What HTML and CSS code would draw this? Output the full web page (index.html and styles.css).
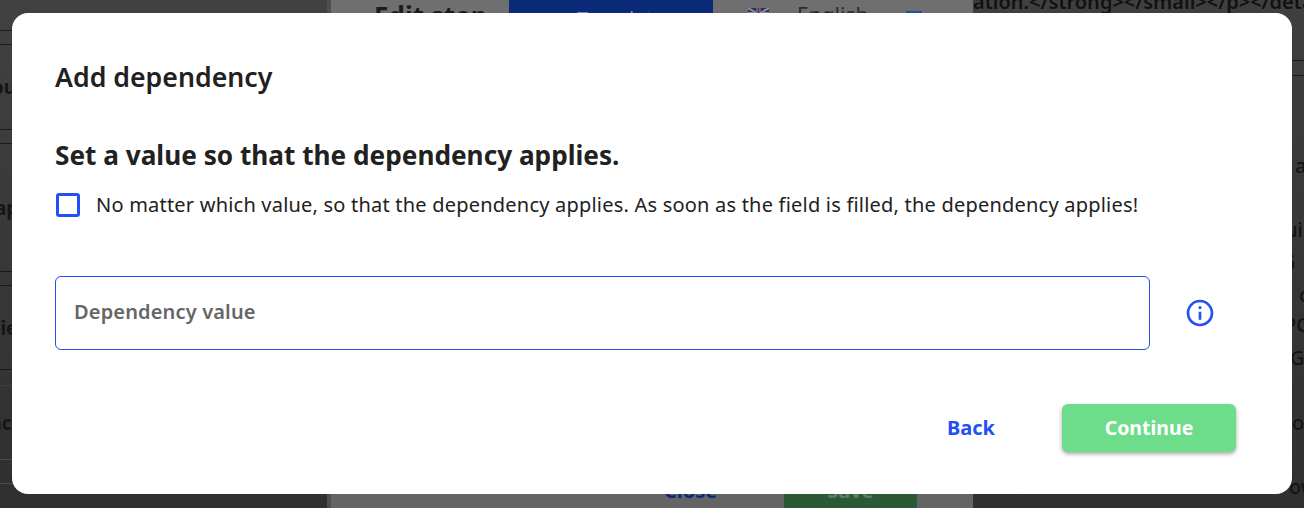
FILE: index.html
```html
<!DOCTYPE html>
<html lang="en">
<head>
<meta charset="utf-8">
<title>Add dependency</title>
<link rel="stylesheet" href="styles.css">
</head>
<body>
<div class="page">
  <aside class="side side-left">
    <div class="row r1"></div>
    <div class="row r2"></div>
    <div class="row r3"><span>Group</span></div>
    <div class="row r2"></div>
    <div class="row r4"><span>Mapping</span></div>
    <div class="row r2"></div>
    <div class="row r5"><span>Field</span></div>
    <div class="row r6"></div>
    <div class="row r7"><span>Include</span></div>
    <div class="row r8"></div>
  </aside>
  <main class="mid">
    <div class="mid-top">
      <span class="mid-title">Edit step</span>
      <span class="mid-tab"><i class="tab-icon"></i>Template</span>
      <svg class="mid-flag" viewBox="0 0 21 12" aria-hidden="true">
        <rect width="21" height="12" fill="#2a2f5c"/>
        <path d="M0 0L21 12M21 0L0 12" stroke="#8a8aa0" stroke-width="2"/>
        <path d="M10.5 0V12M0 6H21" stroke="#8a8aa0" stroke-width="4"/>
        <path d="M10.5 0V12M0 6H21" stroke="#7a2a3a" stroke-width="2"/>
      </svg>
      <span class="mid-lang">English</span>
      <span class="mid-chip"></span>
    </div>
    <div class="mid-bottom">
      <span class="mid-close">Close</span>
      <span class="mid-save">Save</span>
    </div>
  </main>
  <aside class="side side-right">
    <div class="code">ation.&lt;/strong&gt;&lt;/small&gt;&lt;/p&gt;&lt;/details&gt;</div>
    <div class="rlines"></div>
    <div class="rt a">a</div>
    <div class="rt b">ui</div>
    <div class="rt c">G</div>
    <div class="rt d">c</div>
    <div class="rt e">PC</div>
    <div class="rt f">G</div>
    <div class="rt g">ot</div>
    <div class="rt h">ow</div>
  </aside>
</div>
<div class="dialog" role="dialog">
  <h2 class="title">Add dependency</h2>
  <h3 class="subtitle">Set a value so that the dependency applies.</h3>
  <label class="check">
    <span class="box"></span>
    <span class="check-text">No matter which value, so that the dependency applies. As soon as the field is filled, the dependency applies!</span>
  </label>
  <div class="field-row">
    <div class="field"><span class="placeholder">Dependency value</span></div>
    <svg class="info" viewBox="0 0 24 24" aria-hidden="true"><path d="M11 7h2v2h-2zm0 4h2v6h-2zm1-9C6.48 2 2 6.48 2 12s4.48 10 10 10 10-4.48 10-10S17.52 2 12 2zm0 18c-4.41 0-8-3.59-8-8s3.59-8 8-8 8 3.59 8 8-3.59 8-8 8z"/></svg>
  </div>
  <div class="actions">
    <button class="btn-back" type="button">Back</button>
    <button class="btn-continue" type="button">Continue</button>
  </div>
</div>
</body>
</html>
```
FILE: styles.css
```css
* { box-sizing: border-box; }
html, body { margin: 0; height: 100%; }
body { font-family: "Noto Sans", "Open Sans", sans-serif; overflow: hidden; background: #333; color: #212121; }

.page { display: flex; width: 1304px; height: 508px; overflow: hidden; }
.side { flex: none; overflow: hidden; color: #151515; font-weight: 700; font-size: 19px; }
.side-left { width: 327px; background: linear-gradient(#414141, #2f2f2f); }
.side-right { width: 331px; background: linear-gradient(#3f3f3f, #303030); position: relative; }

.row { border-bottom: 1px solid #1b1b1b; display: flex; align-items: center; justify-content: flex-start; }
.r1 { height: 31px; }
.r2 { height: 14px; }
.r3 { height: 85px; }
.r3 span { margin-left: -30px; }
.r4 { height: 128px; }
.r4 span { margin-left: -23px; }
.r5 { height: 84px; }
.r5 span { margin-left: -10px; }
.r6 { height: 16px; border-color: #3d3d3d; }
.r7 { height: 74px; border-color: #4a4a4a; }
.r7 span { margin-left: -18px; }
.r8 { height: 24px; border-color: #4a4a4a; }

.mid { flex: none; width: 646px; border-left: 4px solid #4f4f4f; background: linear-gradient(#6f6f6f, #646464); position: relative; }
.mid-top { display: flex; align-items: flex-start; height: 13px; overflow: hidden; }
.mid-title { margin-left: 43px; width: 135px; font-size: 26px; font-weight: 700; color: #1c1c1c; line-height: 32px; }
.mid-tab { width: 204px; height: 13px; background: #0a2a78; color: #7f8aae; font-size: 20px; line-height: 38px; padding-left: 41px; text-align: left; white-space: nowrap; }
.tab-icon { display: inline-block; width: 8px; height: 8px; margin-right: 19px; border-radius: 50%; background: #6a789f; vertical-align: 2px; }
.mid-flag { flex: none; margin: 8px 0 0 35px; width: 21px; height: 12px; }
.mid-lang { margin-left: 28px; width: 109px; font-size: 21px; line-height: 30px; color: #2b2b2b; }
.mid-chip { margin-top: 11px; width: 16px; height: 2px; background: #2a4aa8; }
.mid-bottom { position: absolute; left: 0; right: 0; bottom: 0; height: 20px; display: flex; overflow: hidden; }
.mid-close { margin-left: 333px; width: 120px; font-weight: 700; font-size: 20px; line-height: 6px; color: #0a2a78; }
.mid-save { width: 133px; height: 20px; background: #2a5a35; color: #5f7d66; font-size: 20px; font-weight: 700; line-height: 6px; text-align: center; }

.code { font-size: 20px; font-weight: 600; line-height: 20px; white-space: nowrap; margin-top: -8px; color: #111; }
.rlines { position: absolute; left: 0; right: 0; top: 60px; height: 16px; border-top: 1px solid #1b1b1b; border-bottom: 1px solid #1b1b1b; }
.rt { position: absolute; font-size: 20px; line-height: 24px; font-weight: 500; color: #141414; }
.a { top: 154px; left: 322px; }
.b { top: 218px; left: 312px; }
.c { top: 250px; left: 308px; }
.d { top: 283px; left: 326px; }
.e { top: 313px; left: 311px; }
.f { top: 346px; left: 317px; }
.g { top: 411px; left: 319px; }
.h { top: 475px; left: 316px; }

.dialog { position: absolute; left: 12px; top: 13px; width: 1280px; height: 481px; background: #fff; border-radius: 16px; padding: 46px 43px 0; display: flex; flex-direction: column; }
.title { margin: 0; font-size: 26.7px; line-height: 36px; font-weight: 600; color: #212121; }
.subtitle { margin: 42px 0 0; font-size: 26.2px; line-height: 36px; font-weight: 700; color: #212121; }
.check { display: flex; align-items: center; margin-top: 19px; height: 26px; }
.box { flex: none; width: 24px; height: 24px; margin-left: 1px; border: 3px solid #2250f4; border-radius: 3px; }
.check-text { margin-left: 16px; font-size: 20px; letter-spacing: .21px; line-height: 26px; color: #212121; white-space: nowrap; }
.field-row { display: flex; align-items: center; margin-top: 58px; }
.field { width: 1095px; height: 74px; border: 1px solid #2250f4; border-radius: 6px; padding: 0 0 4px 18px; display: flex; align-items: center; font-size: 20px; letter-spacing: .15px; font-weight: 600; color: #666; }
.info { flex: none; width: 32px; height: 32px; margin-left: 34px; fill: #2250f4; }
.actions { display: flex; justify-content: flex-end; align-items: flex-start; margin-top: 54px; padding-right: 13px; }
.btn-back { border: 0; background: none; font: inherit; font-size: 20px; line-height: 48px; font-weight: 700; color: #2250f4; padding: 0; margin-right: 67px; }
.btn-continue { width: 174px; height: 48px; border: 0; border-radius: 6px; background: #6edd8b; color: #fff; font: inherit; font-size: 19.5px; line-height: 48px; font-weight: 700; box-shadow: 0 2px 4px rgba(0,0,0,.35); padding: 0; }
```
